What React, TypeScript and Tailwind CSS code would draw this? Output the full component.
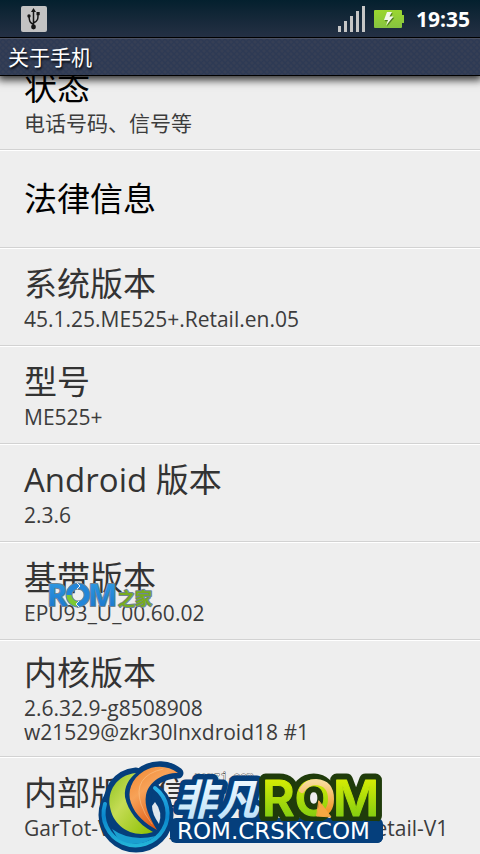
import React from "react";
import { twMerge } from "tailwind-merge";

type Item = {
  title: string;
  lines?: string[];
  enabled?: boolean;
  badge?: React.ReactNode;
};

const UsbIcon = () => (
  <svg viewBox="0 0 26 26" className="size-[26px]">
    <rect width="26" height="26" rx="2" fill="#c3c3c3" />
    <path
      d="M12.500 5V20M12.500 18.500C8 16.500 8.500 14 8 10.500M12.500 17C17.500 14.500 17 12 17 8"
      fill="none"
      stroke="#151515"
      strokeWidth="1.500"
    />
    <path d="M12.500 2l2.500 4h-5z" fill="#151515" />
    <circle cx="12.500" cy="21" r="2.400" fill="#151515" />
    <circle cx="8" cy="10" r="1.700" fill="#151515" />
    <rect x="15.500" y="6" width="3.200" height="3.200" fill="#151515" />
  </svg>
);

const SignalIcon = () => (
  <svg viewBox="0 0 28 26" className="w-7 h-[26px]" fill="#c6c6c6">
    <rect x="0" y="20" width="3" height="6" />
    <rect x="6" y="15" width="3" height="11" />
    <rect x="12" y="10" width="3" height="16" />
    <rect x="18" y="5" width="3" height="21" />
    <rect x="24" y="0" width="3" height="26" />
  </svg>
);

const BatteryIcon = () => (
  <svg viewBox="0 0 30 18" className="w-[30px] h-[18px]">
    <defs>
      <linearGradient id="battery" x2="0" y2="1">
        <stop offset="0" stopColor="#9bd62f" />
        <stop offset="1" stopColor="#86c440" />
      </linearGradient>
    </defs>
    <path
      d="M1 0H27Q28 0 28 1V5H30V13H28V17Q28 18 27 18H1Q0 18 0 17V1Q0 0 1 0Z"
      fill="url(#battery)"
    />
    <path
      d="M13 2.500H18L15.500 7H19.500L12 16L14 10.500H10Z"
      fill="#4f7a22"
      transform="translate(.8 .8)"
    />
    <path d="M13 2H18L15.500 6.500H19.500L12 15.500L14 10H10Z" fill="#f4f7ee" />
  </svg>
);

const RomHomeLogo = () => (
  <svg
    viewBox="0 0 108 32"
    className="absolute left-[46px] top-[36px] w-[108px] h-8"
    fontWeight="700"
    strokeLinejoin="round"
  >
    <defs>
      <linearGradient id="blue" x2="0" y2="1">
        <stop offset="0" stopColor="#35a3e8" />
        <stop offset="1" stopColor="#1670c8" />
      </linearGradient>
    </defs>
    <g stroke="#6f8494" strokeWidth="2" paintOrder="stroke">
      <text x="1" y="27" fontSize="31" fill="url(#blue)" className="font-['Open_Sans']">
        R
      </text>
      <text x="42" y="27" fontSize="31" fill="url(#blue)" className="font-['Open_Sans']">
        M
      </text>
      <text
        x="72"
        y="26"
        fontSize="17"
        fill="#78ac1f"
        className="font-['Noto_Sans_CJK_SC']"
      >
        之家
      </text>
    </g>
    <circle cx="32" cy="16" r="9" fill="none" stroke="#6f8494" strokeWidth="7" />
    <circle cx="32" cy="16" r="9" fill="none" stroke="#2386d8" strokeWidth="5" />
    <path
      d="M23 16A9 9 0 0 0 31 25"
      fill="none"
      stroke="#7dc832"
      strokeWidth="5"
    />
    <path d="M31 4L34 7L31 10M33 28L30 25L33 22" fill="none" stroke="#eeeeee" />
  </svg>
);

const green =
  "M136 773C116 775 107 792 110 807C113 826 132 839 153 832C138 824 128 811 125 797C124 786 129 779 136 773Z";
const orange =
  "M178 773C168 765 154 765 144 771C131 779 127 792 131 803C135 815 146 824 157 830C149 817 144 806 146 795C149 781 163 773 178 773Z";

// coordinates share the screen's own origin
const CrskyLogo = () => (
  <svg
    viewBox="96 760 290 94"
    className="absolute left-24 bottom-0 w-[290px] h-[94px]"
    strokeLinejoin="round"
    strokeLinecap="round"
  >
    <defs>
      <linearGradient id="lime" x2="0" y2="1">
        <stop offset="0" stopColor="#eef500" />
        <stop offset="1" stopColor="#6cc414" />
      </linearGradient>
      <linearGradient id="leaf" x2="1" y2="1">
        <stop offset="0" stopColor="#8fc31f" />
        <stop offset=".4" stopColor="#c5dc55" />
        <stop offset="1" stopColor="#8cc000" />
      </linearGradient>
      <linearGradient id="flame" x2=".6" y2="1">
        <stop offset="0" stopColor="#f0862e" />
        <stop offset=".4" stopColor="#f7a258" />
        <stop offset="1" stopColor="#d9500c" />
      </linearGradient>
      <linearGradient id="ring" x2="0" y2="1">
        <stop offset="0" stopColor="#2bb3e6" />
        <stop offset=".5" stopColor="#0a86cc" />
        <stop offset="1" stopColor="#22b4d8" />
      </linearGradient>
      <linearGradient id="ice" x2="0" y2="1">
        <stop offset="0" stopColor="#ffffff" />
        <stop offset="1" stopColor="#b5def8" />
      </linearGradient>
      <linearGradient id="peach" x2="0" y2="1">
        <stop offset="0" stopColor="#f8dc9c" />
        <stop offset="1" stopColor="#f29a2c" />
      </linearGradient>
    </defs>

    <text
      x="194"
      y="780"
      fontSize="11"
      fill="#ffffff"
      stroke="#555555"
      strokeWidth="1"
      paintOrder="stroke"
      className="font-['Liberation_Mono']"
    >
      romzj.com
    </text>

    <g fill="#053f7c" stroke="#053f7c" strokeWidth="11">
      <circle cx="136" cy="815" r="32" />
      <path d={green} />
      <path d={orange} />
    </g>
    <path d="M155 802Q163 812 159 824Q152 814 152 806Z" fill="#dfe7ee" />
    <path
      d="M105 804A32 32 0 1 0 155 788"
      fill="none"
      stroke="url(#ring)"
      strokeWidth="4"
    />
    <path d="M112 829Q130 842 156 836Q138 850 118 839Z" fill="#1a9fd0" />
    <path d={green} fill="url(#leaf)" />
    <path
      d={orange}
      fill="url(#flame)"
      stroke="#053f7c"
      strokeWidth="5"
      paintOrder="stroke"
    />
    <path
      d="M163 769Q132 776 141 804Q144 814 152 824"
      fill="none"
      stroke="#ffd9a8"
      strokeOpacity=".4"
    />

    <rect x="170" y="818" width="213" height="25" rx="6" fill="#053f7c" />
    <text
      x="175"
      y="815"
      fontSize="42"
      fontWeight="700"
      fontStyle="italic"
      fill="url(#ice)"
      stroke="#053f7c"
      strokeWidth="11"
      paintOrder="stroke"
      className="font-['Noto_Sans_CJK_SC']"
    >
      非凡
    </text>
    <text
      x="262"
      y="816"
      fontSize="50"
      fontWeight="600"
      fill="#1f3b0b"
      stroke="#1f3b0b"
      strokeWidth="13"
      className="font-['Inter']"
    >
      ROM
    </text>
    <text
      x="262"
      y="816"
      fontSize="50"
      fontWeight="600"
      fill="url(#lime)"
      stroke="url(#lime)"
      strokeWidth="1"
      className="font-['Inter']"
    >
      ROM
    </text>
    <path
      d="M302 790Q307 782 316 782Q331 783 331 799Q331 806 328 810"
      fill="none"
      stroke="url(#peach)"
      strokeWidth="6"
    />
    <path d="M319 801L331 817L317 816Z" fill="#f5a742" stroke="#f5a742" />
    <rect x="250" y="821" width="133" height="22" rx="6" fill="#053f7c" />
    <text
      x="177"
      y="839"
      fontSize="23"
      fill="#ffffff"
      className="font-['DejaVu_Sans']"
    >
      ROM.CRSKY.COM
    </text>
  </svg>
);

const items: Item[] = [
  { title: "状态", lines: ["电话号码、信号等"], enabled: true },
  { title: "法律信息", enabled: true },
  { title: "系统版本", lines: ["45.1.25.ME525+.Retail.en.05"] },
  { title: "型号", lines: ["ME525+"] },
  { title: "Android 版本", lines: ["2.3.6"] },
  { title: "基带版本", lines: ["EPU93_U_00.60.02"], badge: <RomHomeLogo /> },
  {
    title: "内核版本",
    lines: ["2.6.32.9-g8508908", "w21529@zkr30lnxdroid18 #1"],
  },
  { title: "内部版本信息", lines: ["GarTot-V1.0.25_ME525+.China.CN_Retail-V1"] },
];

const Row: React.FC<{ item: Item }> = ({ item }) => (
  <li className="relative flex flex-col justify-center gap-[3px] min-h-[98px] px-6 py-3 border-t border-t-white border-b border-b-[#d2d2d2]">
    <h2
      className={twMerge(
        "text-[33px] leading-10 text-[#333333]",
        item.enabled && "text-black",
      )}
    >
      {item.title}
    </h2>
    {item.lines && (
      <p className="text-[21px] leading-6 text-[#3c3c3c]">
        {item.lines.map((line) => (
          <span key={line} className="block whitespace-nowrap">
            {line}
          </span>
        ))}
      </p>
    )}
    {item.badge}
  </li>
);

const App: React.FC = () => {
  return (
    <div className="relative flex flex-col h-screen overflow-hidden bg-[#eeeeee] font-['Open_Sans','Noto_Sans_CJK_SC',sans-serif]">
      <header className="relative z-10 border-b border-black shadow-[0_2px_8px_2px_rgba(0,0,0,0.8)]">
        <div className="flex items-center h-[38px] pl-[21px] pr-[10px] border-b border-black bg-linear-to-b from-[#04202e] to-[#243044]">
          <UsbIcon />
          <div className="flex items-center gap-2 ml-auto">
            <SignalIcon />
            <BatteryIcon />
            <time className="ml-1 text-white text-[21px] leading-6 font-bold">
              19:35
            </time>
          </div>
        </div>
        <h1 className="h-[37px] px-2 border-t border-[#4a5062] text-[21px] leading-9 text-white text-shadow-[1px_2px_2px_rgba(0,0,0,0.8)] bg-[#2e3a54] bg-[radial-gradient(#363f55_1px,transparent_2px),radial-gradient(#363f55_1px,transparent_2px)] bg-size-[6px_6px] bg-position-[0_0,3px_3px]">
          关于手机
        </h1>
      </header>
      <main className="flex-1 overflow-hidden">
        <ul className="-mt-6">
          {items.map((item) => (
            <Row key={item.title} item={item} />
          ))}
        </ul>
      </main>
      <CrskyLogo />
    </div>
  );
};

export default App;
